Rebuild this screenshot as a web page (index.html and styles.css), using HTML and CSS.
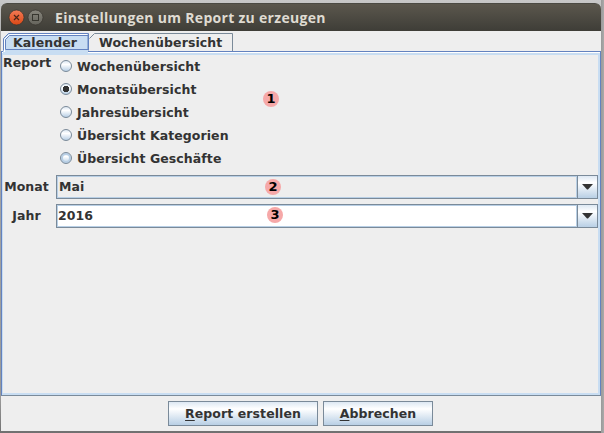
FILE: index.html
```
<!DOCTYPE html>
<html lang="de">
<head>
<meta charset="utf-8">
<title>Einstellungen um Report zu erzeugen</title>
<link rel="stylesheet" href="styles.css">
</head>
<body>
<div class="window">
  <header class="titlebar">
    <svg class="controls" width="40" height="28" viewBox="0 0 40 28">
      <defs>
        <linearGradient id="close" x1="0" y1="0" x2="0" y2="1"><stop offset="0" stop-color="#f37b56"/><stop offset="1" stop-color="#dc4815"/></linearGradient>
        <linearGradient id="max" x1="0" y1="0" x2="0" y2="1"><stop offset="0" stop-color="#87857c"/><stop offset="1" stop-color="#65645c"/></linearGradient>
      </defs>
      <circle cx="9.500" cy="14.500" r="7.500" fill="url(#close)" stroke="#37342e" stroke-width=".7"/>
      <path d="M7 12l5 5M12 12l-5 5" stroke="#4b2619" stroke-width="1.2"/>
      <circle cx="28.500" cy="14.500" r="7.500" fill="url(#max)" stroke="#37342e" stroke-width=".7"/>
      <rect x="25.500" y="11.500" width="6" height="6" fill="none" stroke="#37362f"/>
    </svg>
    <h1 class="title"><span>Einstellungen um Report zu erzeugen</span></h1>
  </header>
  <nav class="tabs">
    <div class="tab tab-active">
      <svg class="tab-shape" width="87" height="22" viewBox="0 0 87 22">
        <path d="M1 22V7L7 1H86V22Z" fill="#c8ddf2"/>
        <path d="M2.500 20V7.500L7.500 2.500H85" fill="none" stroke="#fff"/>
        <path d="M1.500 18.500V6.500L6.500 1.500H86.500V18.500" fill="none" stroke="#6382bf"/>
        <path d="M3.500 17.500V7.500L7.500 3.500H86V17.500Z" fill="none" stroke="#6382bf"/>
      </svg>
      <span>Kalender</span>
    </div>
    <div class="tab tab-second">
      <svg class="tab-shape" width="145" height="19" viewBox="0 0 145 19">
        <path d="M.5 6.500L5.500 1.500H143.500V19" fill="none" stroke="#7a8a99"/>
      </svg>
      <span>Wochenübersicht</span>
    </div>
  </nav>
  <main class="pane">
    <section class="report">
      <div class="label">Report</div>
      <div class="radios">
        <div class="radio"><i class="dot"></i><span>Wochenübersicht</span></div>
        <div class="radio"><i class="dot checked"></i><span>Monatsübersicht</span></div>
        <div class="radio"><i class="dot"></i><span>Jahresübersicht</span></div>
        <div class="radio"><i class="dot"></i><span>Übersicht Kategorien</span></div>
        <div class="radio"><i class="dot hover"></i><span>Übersicht Geschäfte</span></div>
      </div>
    </section>
    <div class="row"><div class="label">Monat</div><div class="combo"><span class="value">Mai</span><span class="arrow"><svg width="11" height="6"><path d="M0 0H11L6 5.500H5Z" fill="#333"/></svg></span></div></div>
    <div class="row"><div class="label">Jahr</div><div class="combo editable"><span class="value">2016</span><span class="arrow"><svg width="11" height="6"><path d="M0 0H11L6 5.500H5Z" fill="#333"/></svg></span></div></div>
  </main>
  <footer class="actions">
    <button class="btn btn-report"><span><u>R</u>eport erstellen</span></button>
    <button class="btn btn-cancel"><span><u>A</u>bbrechen</span></button>
  </footer>
  <b class="marker m1">1</b><b class="marker m2">2</b><b class="marker m3">3</b>
</div>
</body>
</html>
```
FILE: styles.css
```
* { box-sizing: border-box; }
body {
  margin: 0;
  width: 604px;
  height: 433px;
  padding: 3px 3px 2px 1px;
  overflow: hidden;
  background: linear-gradient(90deg, transparent 601px, #999 601px, #aaa), linear-gradient(#c8c8c8, #aaa 40px, #999 400px, #707070);
  font: bold 12.5px/16px "DejaVu Sans", sans-serif;
  letter-spacing: 0.08px;
  color: #333;
}
.window {
  position: relative;
  display: flex;
  flex-direction: column;
  width: 600px;
  height: 428px;
  background: #eee;
  border-radius: 6px 6px 0 0;
}
.titlebar {
  display: flex;
  height: 28px;
  padding-left: 6px;
  border-radius: 6px 6px 0 0;
  border-top: 1px solid #4b4a43;
  background: linear-gradient(#5b574d, #3e3d37);
}
.controls { margin-top: -1px; }
.title {
  margin: 0 0 0 8px;
  font: bold 14px/27px "Open Sans", sans-serif;
  letter-spacing: 0.3px;
  color: #dfdbd2;
}
.tabs { display: flex; height: 20px; padding: 1px 0 0 1px; }
.tab { position: relative; height: 19px; }
.tab-active { width: 87px; padding: 3px 0 0 11px; z-index: 1; }
.tab-second { width: 145px; padding: 3px 0 0 10px; }
.tab-shape { position: absolute; left: 0; top: 0; }
.tab span { position: relative; }
.pane {
  height: 345px;
  border: 1px solid #6382bf;
  border-bottom-color: #7a8a99;
  box-shadow: inset 0 1px #fff, inset 0 3px #c8ddf2, inset 1px 0 #c8ddf2, inset -2px -2px #c8ddf2;
  padding: 3px 2px 2px 1px;
}
.report { display: flex; height: 120px; }
.report .label { width: 57px; padding: 0; text-align: left; }
.radio { display: flex; align-items: center; height: 23px; gap: 5px; }
.dot {
  width: 12px;
  height: 12px;
  margin-top: -1px;
  border: 1px solid #7a8a99;
  border-radius: 50%;
  background: linear-gradient(#dde8f3, #fff 35%, #b8cfe5);
}
.dot.checked { background: radial-gradient(circle, #333 3px, transparent 3.5px), linear-gradient(#dde8f3, #fff 35%, #b8cfe5); }
.dot.hover { box-shadow: inset 0 0 0 2px #b8cfe5; }
.row { display: flex; align-items: center; height: 24px; margin-bottom: 5px; }
.label { width: 53px; padding-right: 6px; text-align: center; }
.combo {
  display: flex;
  width: 542px;
  height: 24px;
  border: 1px solid #7a8a99;
}
.value { flex: 1; padding: 2px 1px; border: 1px solid #b8cfe5; }
.editable .value { background: #fff; padding-left: 0; }
.arrow {
  display: flex;
  align-items: center;
  justify-content: center;
  width: 20px;
  border-left: 1px solid #7a8a99;
  background: linear-gradient(#dde8f3, #fff 30%, #b8cfe5);
}
.actions { display: flex; gap: 5px; padding: 5px 0 0 167px; }
.btn {
  height: 25px;
  padding: 0;
  border: 1px solid #7a8a99;
  background: linear-gradient(#dde8f3, #fff 30%, #b8cfe5);
  font: inherit;
  letter-spacing: inherit;
  color: inherit;
}
.btn-report { width: 150px; }
.btn-cancel { width: 110px; }
.btn u { text-underline-offset: 2px; text-decoration-thickness: 1px; }
.marker {
  position: absolute;
  width: 16px;
  height: 16px;
  border-radius: 50%;
  background: #f6a8a8;
  color: #000;
  font-size: 13px;
  letter-spacing: 0;
  text-align: center;
}
.m1 { left: 262px; top: 88px; }
.m2 { left: 264px; top: 176px; }
.m3 { left: 266px; top: 204px; }
```
